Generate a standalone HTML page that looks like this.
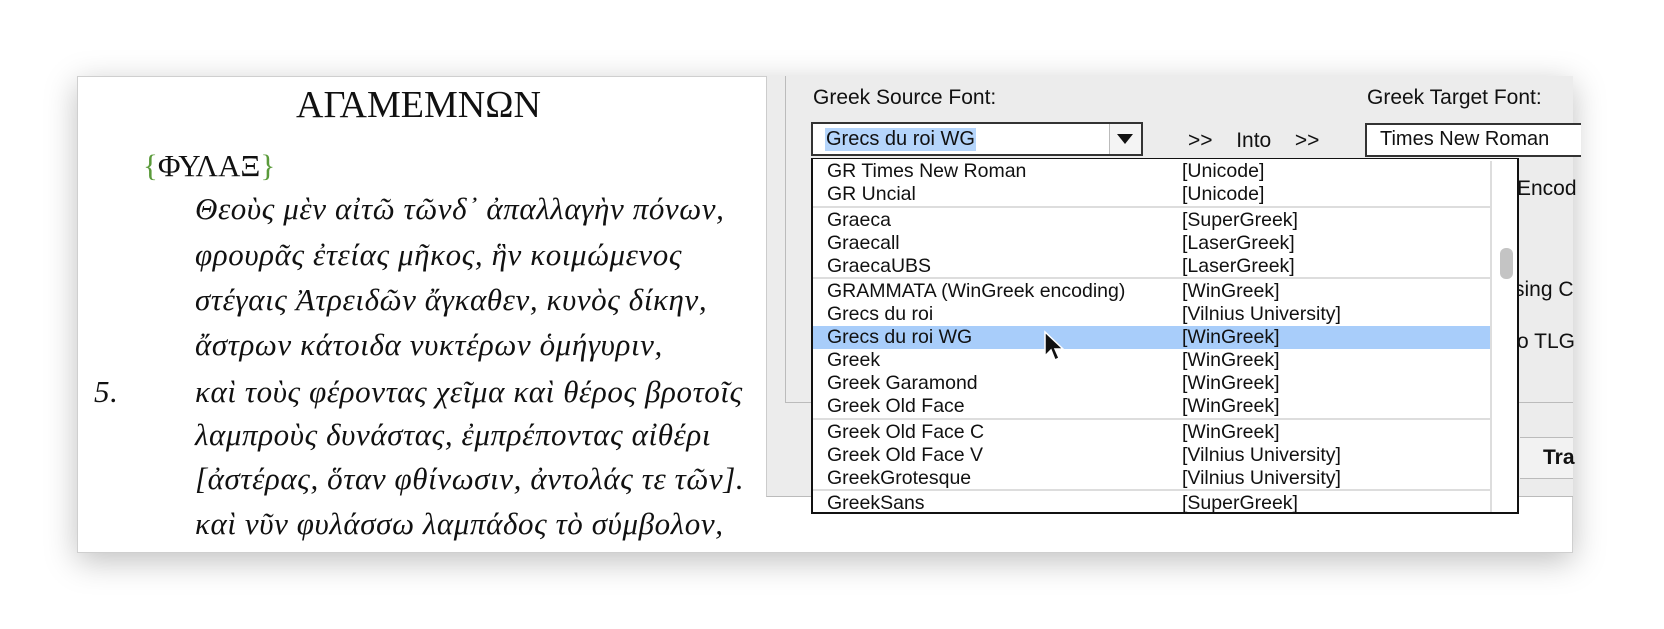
<!DOCTYPE html>
<html><head><meta charset="utf-8"><style>
*{margin:0;padding:0;box-sizing:border-box}
body{width:1664px;height:629px;background:#fff;position:relative;overflow:hidden;font-family:"Liberation Sans","DejaVu Sans",sans-serif}
.card{position:absolute;left:77px;top:76px;width:1496px;height:477px;background:#fff;border:1px solid #cfcfcf;box-shadow:0 8px 30px rgba(0,0,0,.25)}
.abs{position:absolute;white-space:nowrap}
.g{font-family:"Liberation Serif","DejaVu Serif",serif;font-style:italic;font-size:31px;letter-spacing:0.6px;color:#111;left:195px}
.panel{position:absolute;left:766px;top:76px;width:807px;height:421px;background:#ececec;border-left:1px solid #ccc;border-bottom:1px solid #bbb}
.lbl{font-size:21px;color:#111}
.pop{position:absolute;left:811px;top:158px;width:708px;height:356px;background:#fff;border:2px solid #111;border-top:1.5px solid #111;overflow:hidden}
.row{position:absolute;left:0;width:677px;height:23px;font-size:19.5px;color:#111;line-height:23px}
.row span{position:absolute}
.row .a{left:14px}.row .b{left:369px}
.sep{position:absolute;left:0;width:677px;height:2px;background:#ddd}
</style></head><body>
<div class="card"></div>
<div class="abs" style="left:296px;top:83px;font-family:'Liberation Serif',serif;font-size:38px;color:#111">ΑΓΑΜΕΜΝΩΝ</div>
<div class="abs" style="left:143px;top:148px;font-family:'Liberation Serif',serif;font-size:31px;color:#111"><span style="color:#5a9a3a">{</span>ΦΥΛΑΞ<span style="color:#5a9a3a">}</span></div>
<div class="abs g" style="top:191px">Θεοὺς μὲν αἰτῶ τῶνδ᾽ ἀπαλλαγὴν πόνων,</div>
<div class="abs g" style="top:237px">φρουρᾶς ἐτείας μῆκος, ἣν κοιμώμενος</div>
<div class="abs g" style="top:282px">στέγαις Ἀτρειδῶν ἄγκαθεν, κυνὸς δίκην,</div>
<div class="abs g" style="top:327px">ἄστρων κάτοιδα νυκτέρων ὁμήγυριν,</div>
<div class="abs g" style="left:94px;top:374px">5.</div>
<div class="abs g" style="top:374px">καὶ τοὺς φέροντας χεῖμα καὶ θέρος βροτοῖς</div>
<div class="abs g" style="top:417px">λαμπροὺς δυνάστας, ἐμπρέποντας αἰθέρι</div>
<div class="abs g" style="top:461px">[ἀστέρας, ὅταν φθίνωσιν, ἀντολάς τε τῶν].</div>
<div class="abs g" style="top:506px">καὶ νῦν φυλάσσω λαμπάδος τὸ σύμβολον,</div>

<div class="panel"></div>
<div class="abs" style="left:785px;top:76px;width:1px;height:327px;background:#bbb"></div>
<div class="abs" style="left:785px;top:402px;width:788px;height:1px;background:#bbb"></div>
<div class="abs" style="left:1520px;top:437px;width:53px;height:42px;border-top:1px solid #bbb;border-bottom:1px solid #bbb;background:#f2f2f2"></div>
<div class="abs" style="left:1543px;top:446px;font-weight:bold;font-size:21px;color:#111">Tra</div>
<div class="abs lbl" style="left:813px;top:86px">Greek Source Font:</div>
<div class="abs lbl" style="left:1367px;top:86px">Greek Target Font:</div>
<div class="abs" style="left:811px;top:122px;width:332px;height:34px;background:#fff;border:2px solid #333;border-top-width:2px"></div>
<div class="abs" style="left:1109px;top:124px;width:32px;height:30px;border-left:1px solid #bbb;background:#f4f4f4"></div>
<div class="abs" style="left:1117px;top:134px;width:0;height:0;border-left:8px solid transparent;border-right:8px solid transparent;border-top:10px solid #111"></div>
<div class="abs" style="left:825px;top:128px;font-size:20px;color:#111;background:#b5d5fb;padding:0 1px">Grecs du roi WG</div>
<div class="abs lbl" style="left:1188px;top:129px;word-spacing:6px">&gt;&gt; &nbsp;Into &nbsp;&gt;&gt;</div>
<div class="abs" style="left:1365px;top:123px;width:216px;height:34px;background:#fff;border:2px solid #333;border-right:none"></div>
<div class="abs" style="left:1380px;top:128px;font-size:20px;color:#111">Times New Roman</div>
<div class="abs lbl" style="left:1517px;top:177px">Encod</div>
<div class="abs lbl" style="left:1514px;top:278px">sing C</div>
<div class="abs lbl" style="left:1517px;top:330px">o TLG</div>

<div class="pop">
<div class="row" style="top:1px"><span class="a">GR Times New Roman</span><span class="b">[Unicode]</span></div>
<div class="row" style="top:24px"><span class="a">GR Uncial</span><span class="b">[Unicode]</span></div>
<div class="sep" style="top:47px"></div>
<div class="row" style="top:50px"><span class="a">Graeca</span><span class="b">[SuperGreek]</span></div>
<div class="row" style="top:73px"><span class="a">Graecall</span><span class="b">[LaserGreek]</span></div>
<div class="row" style="top:96px"><span class="a">GraecaUBS</span><span class="b">[LaserGreek]</span></div>
<div class="sep" style="top:118px"></div>
<div class="row" style="top:121px"><span class="a">GRAMMATA (WinGreek encoding)</span><span class="b">[WinGreek]</span></div>
<div class="row" style="top:144px"><span class="a">Grecs du roi</span><span class="b">[Vilnius University]</span></div>
<div class="row" style="top:167px;background:#a8cdfa"><span class="a">Grecs du roi WG</span><span class="b">[WinGreek]</span></div>
<div class="row" style="top:190px"><span class="a">Greek</span><span class="b">[WinGreek]</span></div>
<div class="row" style="top:213px"><span class="a">Greek Garamond</span><span class="b">[WinGreek]</span></div>
<div class="row" style="top:236px"><span class="a">Greek Old Face</span><span class="b">[WinGreek]</span></div>
<div class="sep" style="top:259px"></div>
<div class="row" style="top:262px"><span class="a">Greek Old Face C</span><span class="b">[WinGreek]</span></div>
<div class="row" style="top:285px"><span class="a">Greek Old Face V</span><span class="b">[Vilnius University]</span></div>
<div class="row" style="top:308px"><span class="a">GreekGrotesque</span><span class="b">[Vilnius University]</span></div>
<div class="sep" style="top:330px"></div>
<div class="row" style="top:333px"><span class="a">GreekSans</span><span class="b">[SuperGreek]</span></div>
<div class="abs" style="left:677px;top:2px;width:2px;height:352px;background:#ddd"></div>
<div class="abs" style="left:687px;top:89px;width:13px;height:31px;border-radius:6px;background:#c4c4c4"></div>
</div>
<svg class="abs" style="left:1043px;top:330px" width="22" height="34" viewBox="0 0 22 34"><path d="M2 2 L2 26 L8 20 L12 30 L16 28 L12 19 L20 19 Z" fill="#111" stroke="#fff" stroke-width="1.5"/></svg>
</body></html>
